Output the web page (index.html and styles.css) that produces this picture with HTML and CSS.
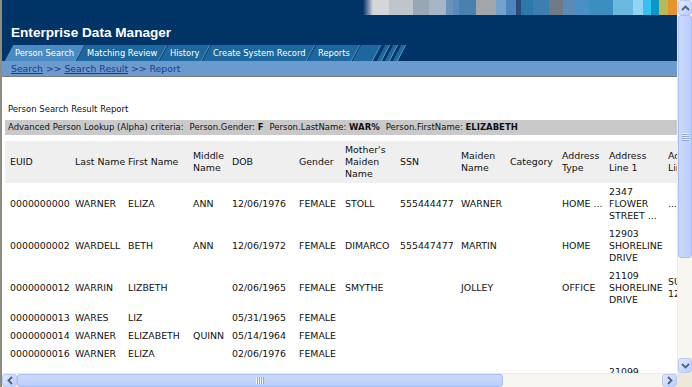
FILE: index.html
```html
<!DOCTYPE html>
<html lang="en">
<head>
<meta charset="utf-8">
<title>Enterprise Data Manager - Report</title>
<link rel="stylesheet" href="styles.css">
</head>
<body>
<div class="window">
  <div class="viewport">
    <header class="header">
      <div class="stripe-row"><div class="stripe"></div></div>
      <h1 class="title">Enterprise Data Manager</h1>
      <nav class="tabs">
        <a class="tab active"><span>Person Search</span></a>
        <a class="tab"><span>Matching Review</span></a>
        <a class="tab"><span>History</span></a>
        <a class="tab"><span>Create System Record</span></a>
        <a class="tab"><span>Reports</span></a>
        <span class="tab tab-blank"></span>
        <span class="tab-end"></span>
        <span class="tab-end"></span>
        <span class="tab-end"></span>
      </nav>
      <div class="crumbs">
        <a class="crumb-link">Search</a> &gt;&gt; <a class="crumb-link">Search Result</a> &gt;&gt; Report
      </div>
    </header>
    <main class="content">
      <p class="report-title">Person Search Result Report</p>
      <div class="criteria">Advanced Person Lookup (Alpha) criteria:<span class="crit">Person.Gender: <b>F</b></span><span class="crit">Person.LastName: <b>WAR%</b></span><span class="crit">Person.FirstName: <b>ELIZABETH</b></span></div>
      <table class="results">
        <colgroup>
          <col class="c1"><col class="c2"><col class="c3"><col class="c4"><col class="c5"><col class="c6"><col class="c7"><col class="c8"><col class="c9"><col class="c10"><col class="c11"><col class="c12"><col class="c13"><col class="c14">
        </colgroup>
        <thead>
          <tr>
            <th>EUID</th><th>Last Name</th><th>First Name</th><th>Middle<br>Name</th><th>DOB</th><th>Gender</th><th>Mother's<br>Maiden<br>Name</th><th>SSN</th><th>Maiden<br>Name</th><th>Category</th><th>Address<br>Type</th><th>Address<br>Line 1</th><th>Address<br>Line 2</th><th>City</th>
          </tr>
        </thead>
        <tbody>
          <tr>
            <td>0000000000</td><td>WARNER</td><td>ELIZA</td><td>ANN</td><td>12/06/1976</td><td>FEMALE</td><td>STOLL</td><td>555444477</td><td>WARNER</td><td></td><td>HOME ...</td><td>2347<br>FLOWER<br>STREET ...</td><td>...</td><td>MONROVIA</td>
          </tr>
          <tr>
            <td>0000000002</td><td>WARDELL</td><td>BETH</td><td>ANN</td><td>12/06/1972</td><td>FEMALE</td><td>DIMARCO</td><td>555447477</td><td>MARTIN</td><td></td><td>HOME</td><td>12903<br>SHORELINE<br>DRIVE</td><td></td><td>MONROVIA</td>
          </tr>
          <tr>
            <td>0000000012</td><td>WARRIN</td><td>LIZBETH</td><td></td><td>02/06/1965</td><td>FEMALE</td><td>SMYTHE</td><td></td><td>JOLLEY</td><td></td><td>OFFICE</td><td>21109<br>SHORELINE<br>DRIVE</td><td>SUITE<br>1200</td><td>MONROVIA</td>
          </tr>
          <tr>
            <td>0000000013</td><td>WARES</td><td>LIZ</td><td></td><td>05/31/1965</td><td>FEMALE</td><td></td><td></td><td></td><td></td><td></td><td></td><td></td><td></td>
          </tr>
          <tr>
            <td>0000000014</td><td>WARNER</td><td>ELIZABETH</td><td>QUINN</td><td>05/14/1964</td><td>FEMALE</td><td></td><td></td><td></td><td></td><td></td><td></td><td></td><td></td>
          </tr>
          <tr>
            <td>0000000016</td><td>WARNER</td><td>ELIZA</td><td></td><td>02/06/1976</td><td>FEMALE</td><td></td><td></td><td></td><td></td><td></td><td></td><td></td><td></td>
          </tr>
          <tr>
            <td>0000000017</td><td>WARREN</td><td>ELIZABETH</td><td></td><td>03/22/1970</td><td>FEMALE</td><td>JONES</td><td>555123456</td><td></td><td></td><td>HOME</td><td>21099<br>MAPLE<br>AVENUE</td><td></td><td>MONROVIA</td>
          </tr>
        </tbody>
      </table>
    </main>
  </div>
  <div class="vscroll">
    <div class="sb-btn"><svg width="9" height="6" viewBox="0 0 9 6"><polyline points="1,5 4.5,1.5 8,5" fill="none" stroke="#4d6185" stroke-width="1.8"/></svg></div>
    <div class="vtrack">
      <div class="vthumb"><svg width="7" height="8" viewBox="0 0 7 8"><path d="M0 0.5H7M0 2.5H7M0 4.5H7M0 6.5H7" stroke="#eef3fe" stroke-width="1"/><path d="M0 1.5H7M0 3.5H7M0 5.5H7M0 7.5H7" stroke="#8ca5e0" stroke-width="1"/></svg></div>
    </div>
    <div class="sb-btn"><svg width="9" height="6" viewBox="0 0 9 6"><polyline points="1,1 4.5,4.5 8,1" fill="none" stroke="#4d6185" stroke-width="1.8"/></svg></div>
  </div>
  <div class="hscroll">
    <div class="sb-btn"><svg width="6" height="9" viewBox="0 0 6 9"><polyline points="5,1 1.5,4.5 5,8" fill="none" stroke="#4d6185" stroke-width="1.8"/></svg></div>
    <div class="htrack">
      <div class="hthumb"><svg width="8" height="7" viewBox="0 0 8 7"><path d="M0.5 0V7M2.5 0V7M4.5 0V7M6.5 0V7" stroke="#eef3fe" stroke-width="1"/><path d="M1.5 0V7M3.5 0V7M5.5 0V7M7.5 0V7" stroke="#8ca5e0" stroke-width="1"/></svg></div>
    </div>
    <div class="sb-btn"><svg width="6" height="9" viewBox="0 0 6 9"><polyline points="1,1 4.5,4.5 1,8" fill="none" stroke="#4d6185" stroke-width="1.8"/></svg></div>
  </div>
  <div class="corner"></div>
</div>
</body>
</html>
```

FILE: styles.css
```css
html, body {
  margin: 0;
  padding: 0;
  background: #ffffff;
}

body {
  font-family: "DejaVu Sans", Verdana, sans-serif;
  color: #111;
}

.window {
  width: 692px;
  height: 387px;
  box-sizing: border-box;
  border-left: 2px solid #8d8b82;
  display: grid;
  grid-template-columns: 1fr 15px;
  grid-template-rows: 1fr 14px;
  overflow: hidden;
}

.viewport {
  grid-column: 1;
  grid-row: 1;
  overflow: hidden;
  min-width: 0;
  background: #fff;
}

/* ---------- header ---------- */
.header {
  background: #003366;
}

.stripe-row {
  display: flex;
  justify-content: flex-end;
  height: 15px;
}

.stripe {
  width: 314px;
  height: 15px;
  background: linear-gradient(90deg,
    #003366 0px, #d6d8da 10px,
    #d4d6d9 10px, #d4d6d9 26px,
    #c0c5cc 26px, #c0c5cc 50px,
    #98a6b6 50px, #98a6b6 66px,
    #a6b6c8 66px, #a6b6c8 83px,
    #6a92bb 83px, #6a92bb 90px,
    #5a8bc0 90px, #5a8bc0 96px,
    #4a80b0 96px, #4a80b0 113px,
    #a2a5a9 113px, #a2a5a9 133px,
    #72a2d2 133px, #72a2d2 143px,
    #4a86bd 143px, #4a86bd 153px,
    #2b4a78 153px, #2b4a78 158px,
    #2b78ad 158px, #2b78ad 170px,
    #3b7fb0 170px, #3b7fb0 186px,
    #717987 186px, #717987 200px,
    #5b8ab7 200px, #5b8ab7 213px,
    #4a90c8 213px, #4a90c8 226px,
    #3a8fc0 226px, #3a8fc0 250px,
    #6ab8e0 250px, #6ab8e0 270px,
    #92d2f2 270px, #92d2f2 280px,
    #33c2f0 280px, #33c2f0 288px,
    #0a98c6 288px, #0a98c6 296px,
    #b9b95a 296px, #b9b95a 305px,
    #e8922f 305px, #e8922f 314px);
}

.title {
  margin: 0;
  height: 30px;
  box-sizing: border-box;
  padding: 6px 0 0 9px;
  font-family: "Liberation Sans", Arial, sans-serif;
  font-size: 13.6px;
  line-height: 24px;
  font-weight: bold;
  color: #ffffff;
}

.tabs {
  display: flex;
  align-items: stretch;
  height: 16px;
  padding-left: 7px;
  background: #003366;
}

.tab {
  display: flex;
  align-items: center;
  padding: 0 6px;
  background: #1c689e;
  border-right: 1px solid #0b3f6b;
  box-shadow: inset -1px 0 0 #5e94c2;
  transform: skewX(-28deg);
  color: #ffffff;
  font-size: 8.3px;
  white-space: nowrap;
  text-decoration: none;
}

.tab span {
  display: inline-block;
  transform: skewX(28deg);
}

.tab.active {
  background: #4a8bc3;
}

.tab-blank {
  width: 8px;
  border-right: 1px solid #0b3f6b;
}

.tab-end {
  width: 5px;
  margin-left: 3px;
  background: #1c689e;
  transform: skewX(-28deg);
  box-shadow: inset -1px 0 0 #5e94c2;
}

.crumbs {
  height: 15px;
  line-height: 15px;
  padding-left: 9px;
  background: #6a9bcc;
  border-bottom: 1px solid #7b7b7b;
  color: #1b3a93;
  font-size: 9.3px;
  white-space: nowrap;
}

.crumb-link {
  color: #1b3a93;
  text-decoration: underline;
}

/* ---------- content ---------- */
.content {
  padding-left: 3px;
}

.report-title {
  margin: 26px 0 0 3px;
  font-size: 8.5px;
  line-height: 12px;
  color: #111;
}

.criteria {
  margin-top: 5px;
  height: 15px;
  line-height: 15px;
  padding-left: 3px;
  background: #c9c9c9;
  font-size: 8.5px;
  white-space: nowrap;
  color: #111;
}

.crit {
  margin-left: 6px;
}

.results {
  margin-top: 6px;
  border-collapse: collapse;
  table-layout: fixed;
  width: 821px;
  font-size: 9.4px;
  line-height: 12px;
}

.c1 { width: 68px; }
.c2 { width: 53px; }
.c3 { width: 65px; }
.c4 { width: 39px; }
.c5 { width: 67px; }
.c6 { width: 46px; }
.c7 { width: 55px; }
.c8 { width: 61px; }
.c9 { width: 49px; }
.c10 { width: 52px; }
.c11 { width: 47px; }
.c12 { width: 59px; }
.c13 { width: 70px; }
.c14 { width: 90px; }

.results th,
.results td {
  padding: 3px 2px;
  text-align: left;
  vertical-align: middle;
  font-weight: normal;
  white-space: nowrap;
  overflow: hidden;
  color: #111;
}

.results th:first-child,
.results td:first-child {
  padding-left: 5px;
}

.results thead tr {
  background: #efefef;
}

/* ---------- scrollbars ---------- */
.vscroll {
  grid-column: 2;
  grid-row: 1;
  display: flex;
  flex-direction: column;
  background: #f7f6f0;
  border-left: 1px solid #ecebe4;
}

.sb-btn {
  flex: 0 0 auto;
  width: 15px;
  height: 15px;
  box-sizing: border-box;
  display: flex;
  align-items: center;
  justify-content: center;
  background: linear-gradient(135deg, #e0e9fe, #bccdf9);
  border: 1px solid #b7c9f4;
  border-radius: 3px;
}

.vscroll .sb-btn {
  width: 14px;
}

.vtrack {
  flex: 1;
  display: flex;
  flex-direction: column;
}

.vthumb {
  height: 243px;
  box-sizing: border-box;
  display: flex;
  align-items: center;
  justify-content: center;
  background: linear-gradient(90deg, #cbd9fd, #bccdfa);
  border: 1px solid #a8bdf1;
  border-radius: 3px;
}

.hscroll {
  grid-column: 1;
  grid-row: 2;
  display: flex;
  background: #f7f6f0;
  border-top: 1px solid #ecebe4;
}

.hscroll .sb-btn {
  height: 13px;
}

.htrack {
  flex: 1;
  display: flex;
}

.hthumb {
  width: 486px;
  box-sizing: border-box;
  display: flex;
  align-items: center;
  justify-content: center;
  background: linear-gradient(180deg, #cbd9fd, #bccdfa);
  border: 1px solid #a8bdf1;
  border-radius: 3px;
}

.corner {
  grid-column: 2;
  grid-row: 2;
  background: #ece9d8;
}
```
